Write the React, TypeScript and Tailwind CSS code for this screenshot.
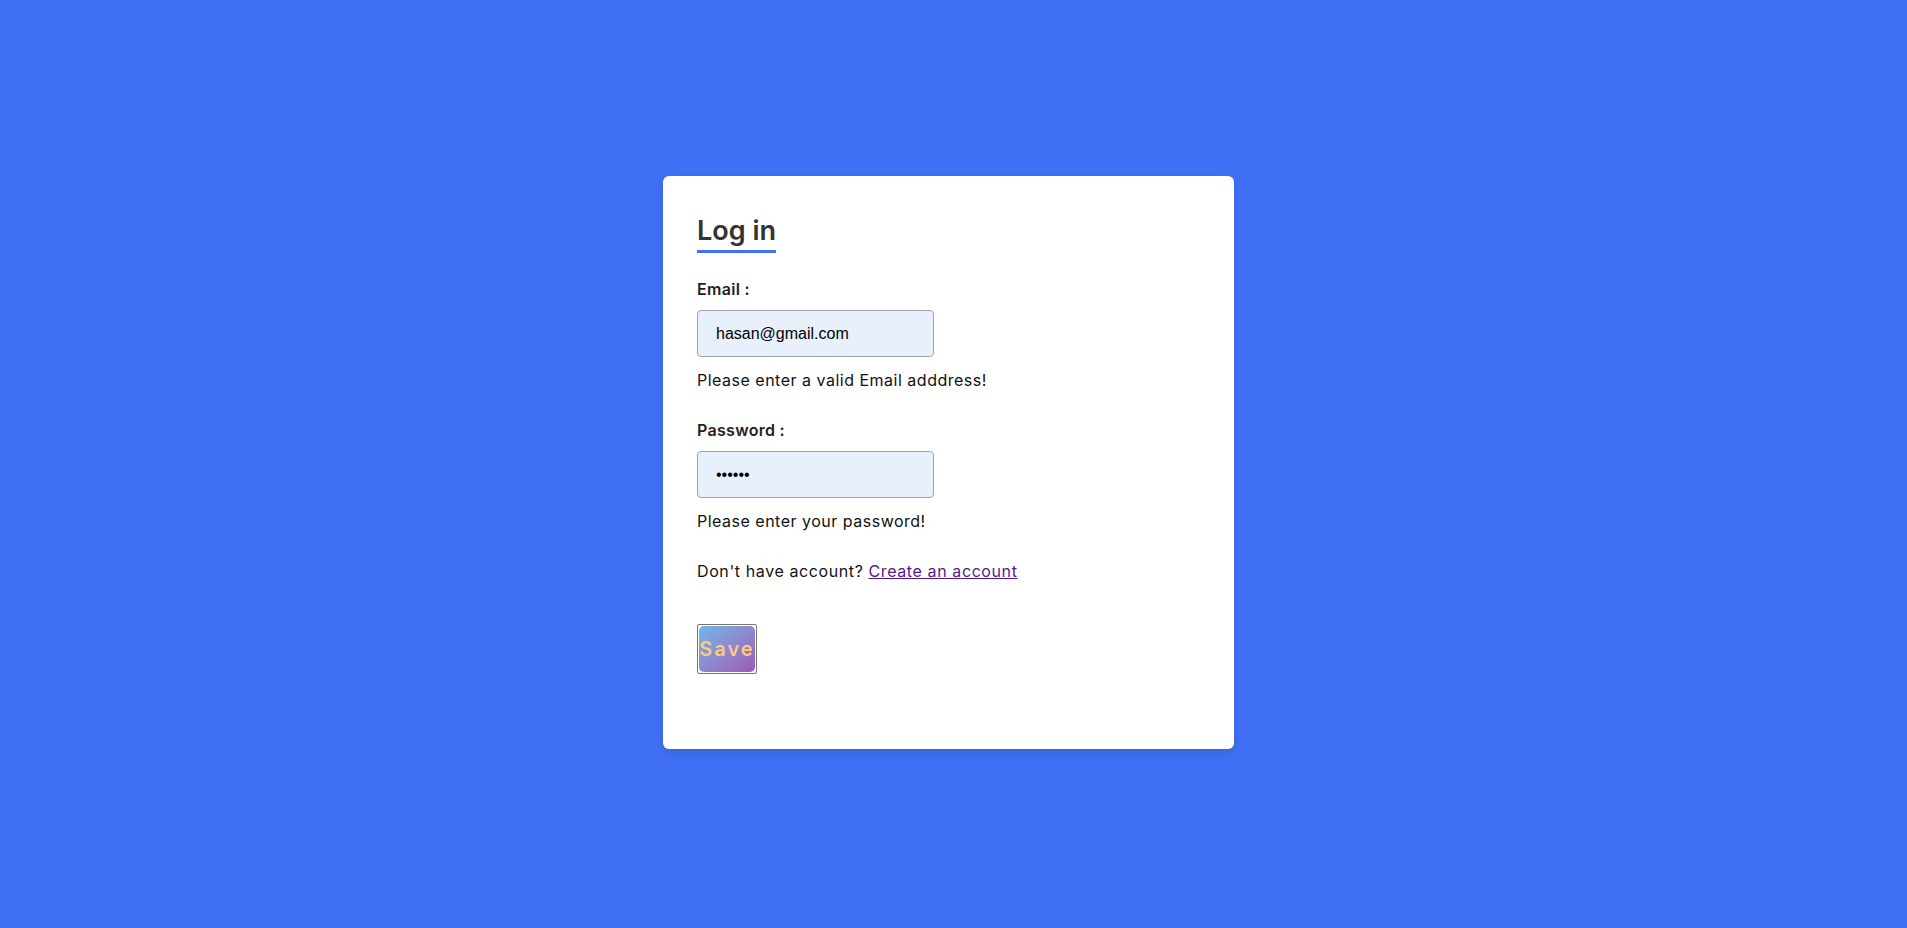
import { useState } from "react"

const font = { fontFamily: "Inter, 'Noto Sans', sans-serif" }

function Field({
  label,
  type,
  value,
  error,
}: {
  label: string
  type: string
  value: string
  error: string
}) {
  const [val, setVal] = useState(value)
  return (
    <div className="flex flex-col items-start">
      <label className="text-[16px] font-semibold leading-[24px] tracking-[0.3px] text-[#222]">{label}</label>
      <input
        type={type}
        value={val}
        onChange={(e) => setVal(e.target.value)}
        className="mt-[9px] h-[47px] w-[237px] rounded-[4px] border border-[#a3a3a3] bg-[#e8f0fe] px-[18px] text-[16px] text-black outline-none"
        style={{ fontFamily: "'Liberation Sans', Arial, sans-serif" }}
      />
      <p className="mt-[11px] text-[16px] leading-[24px] tracking-[0.5px] text-[#111]">{error}</p>
    </div>
  )
}

export default function App() {
  return (
    <div
      className="flex min-h-screen w-full items-center justify-center bg-[#4070f4] pb-[3px] pr-[10px]"
      style={font}
    >
      <div className="flex h-[573px] w-[571px] flex-col rounded-[6px] bg-white px-[34px] pt-[37px] shadow-[0_4px_10px_rgba(0,0,0,0.12)]">
        <div>
          <h1 className="inline-block border-b-[3px] border-[#4070f4] pb-[1px] text-[27px] font-semibold leading-[36px] text-[#333]">
            Log in
          </h1>
        </div>

        <div className="mt-[24px] flex flex-col gap-[26px]">
          <Field
            label="Email :"
            type="email"
            value="hasan@gmail.com"
            error="Please enter a valid Email adddress!"
          />
          <Field
            label="Password :"
            type="password"
            value="123456"
            error="Please enter your password!"
          />
        </div>

        <p className="mt-[26px] text-[16px] leading-[24px] tracking-[0.6px] text-[#111]">
          Don't have account?{" "}
          <a href="#signup" className="text-[#551a8b] underline">
            Create an account
          </a>
        </p>

        <div className="mt-[41px]">
          <button className="h-[50px] w-[60px] rounded-[2px] border border-[#767676] bg-white p-[1px]">
            <span className="flex h-full w-full items-center justify-center overflow-visible whitespace-nowrap rounded-[5px] bg-gradient-to-br from-[#6cb6e6] to-[#9b59b6] text-[20px] font-semibold tracking-[2px] text-[#fccb7e]">
              Save
            </span>
          </button>
        </div>
      </div>
    </div>
  )
}
